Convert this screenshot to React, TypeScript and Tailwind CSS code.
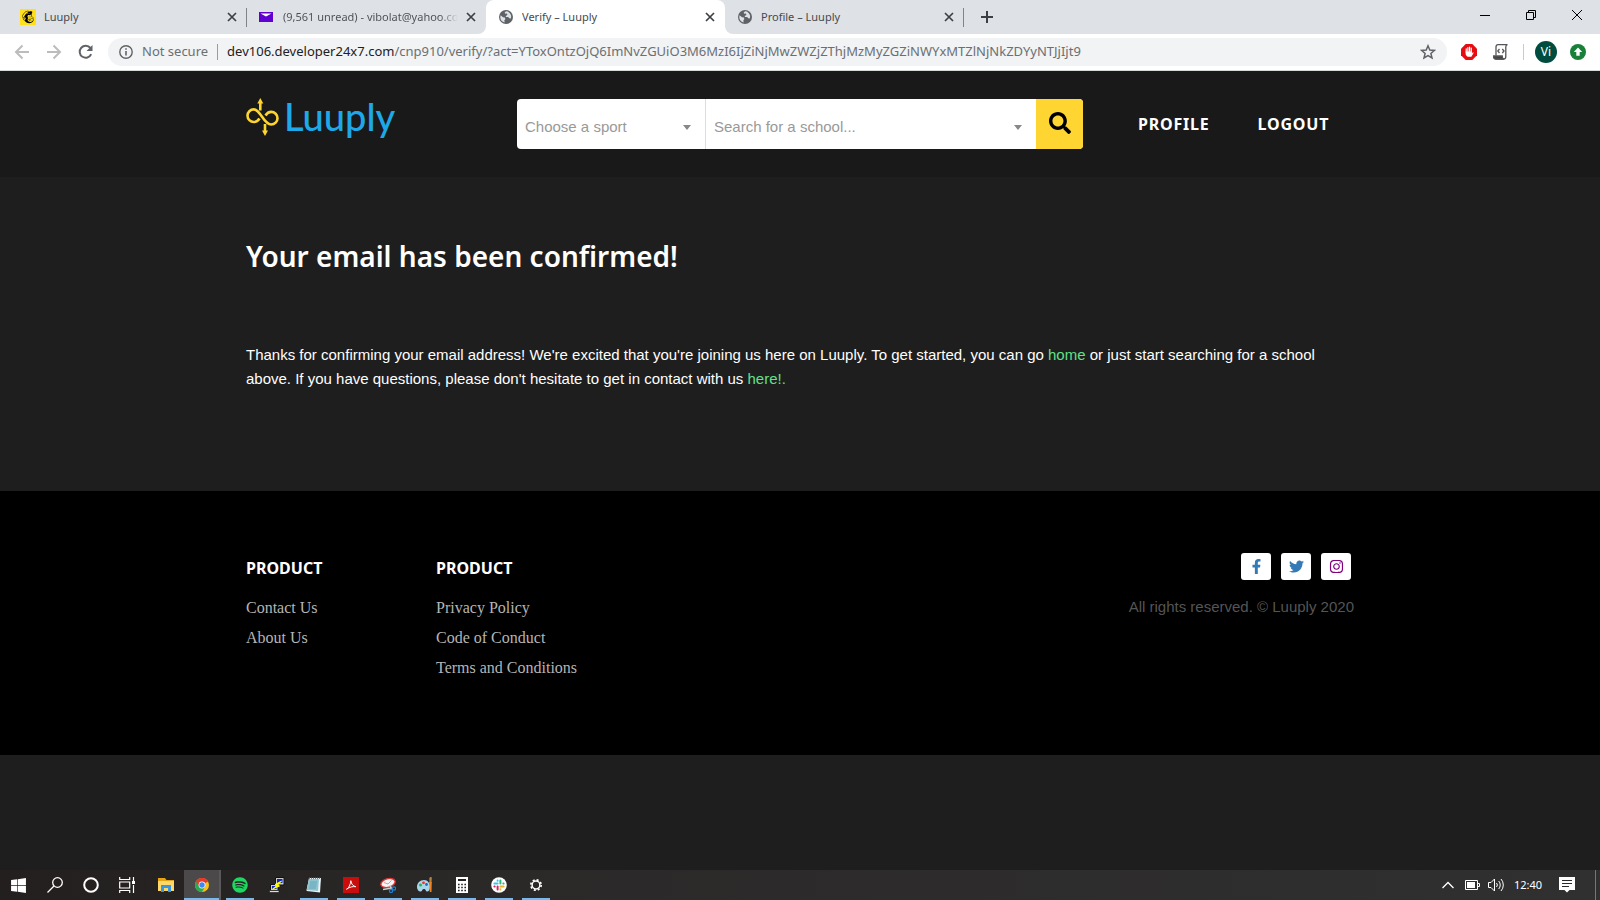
import React from "react";
import { FaFacebookF, FaTwitter, FaInstagram, FaSearch, FaSpotify, FaWindows, FaMailchimp } from "react-icons/fa";

const chromeFont = "font-['Noto_Sans',sans-serif]";
const brandFont = "font-['Noto_Sans','Open_Sans',sans-serif]";

function Globe() {
  return (
    <svg viewBox="0 0 16 16" className="size-4">
      <circle cx="8" cy="8" r="7" fill="#5f6368" />
      <path d="M2.6 6.2 5 8.2l1.8.2.6 1.6-1 1.2.2 2.2C4 13 2.2 10.800 2.300 8zM8 2.300l-1.400 1.500.8 1L9 4.600l.4 1.500-1.700 1 .3 1 2.200-.1 1 1.300 1.600.3c.8-2.400.3-4-1.200-5.600L10 2.600z" fill="#dee1e6" />
    </svg>
  );
}

function Mailchimp() {
  return (
    <span className="grid size-4 place-items-center bg-[#ffe01b] text-black">
      <FaMailchimp size={14} />
    </span>
  );
}

function YahooMail() {
  return (
    <svg viewBox="0 0 16 16" className="size-4">
      <path d="M0 3h14v10H0z" fill="#6001d2" />
      <path d="M1.500 4.500h11L7 7.500z" fill="#fff" />
    </svg>
  );
}

function CloseMark() {
  return (
    <svg viewBox="0 0 10 10" className="size-[10px]" stroke="#3c4043" strokeWidth="1.700">
      <path d="M1 1l8 8M9 1l-8 8" />
    </svg>
  );
}

type TabProps = { icon: React.ReactNode; title: string; active?: boolean; fade?: boolean; divider?: boolean };

function Tab({ icon, title, active, fade, divider }: TabProps) {
  return (
    <div className={`relative flex h-[34px] w-[239px] min-w-0 items-center pl-3 pr-[10px] ${active ? "rounded-t-lg bg-white" : ""}`}>
      {active && (
        <svg viewBox="0 0 255 8" className="pointer-events-none absolute -left-2 bottom-0 h-2 w-[255px]" fill="#fff">
          <path d="M0 8a8 8 0 0 0 8-8v8zM255 8a8 8 0 0 1-8-8v8z" />
        </svg>
      )}
      <span className="shrink-0">{icon}</span>
      <a
        href="#tab"
        className={`ml-2 flex-1 overflow-hidden whitespace-nowrap text-[11px] ${fade ? "bg-linear-to-r from-[#4b4e52] from-90% to-transparent bg-clip-text text-transparent" : "text-[#45494d]"}`}
      >
        {title}
      </a>
      <button aria-label={`Close ${title}`} className="ml-2 shrink-0">
        <CloseMark />
      </button>
      {divider && <span className="absolute right-0 top-2 h-[19px] w-px bg-[#808387]" />}
    </div>
  );
}

function TabStrip() {
  return (
    <div className="flex h-[34px] items-center bg-[#dee1e6] pl-2">
      <Tab icon={<Mailchimp />} title="Luuply" divider />
      <Tab icon={<YahooMail />} title="(9,561 unread) - vibolat@yahoo.com" fade />
      <Tab icon={<Globe />} title="Verify – Luuply" active />
      <Tab icon={<Globe />} title="Profile – Luuply" divider />
      <button aria-label="New tab" className="ml-4">
        <svg viewBox="0 0 14 14" className="size-[14px]" stroke="#3c4043" strokeWidth="2">
          <path d="M7 1v12M1 7h12" />
        </svg>
      </button>
      <div className="mb-[5px] ml-auto flex items-center gap-9 pr-[18px]">
        <button aria-label="Minimize">
          <svg viewBox="0 0 10 10" className="size-[10px]" stroke="#000">
            <path d="M0 5.500h10" />
          </svg>
        </button>
        <button aria-label="Restore">
          <svg viewBox="0 0 10 10" className="size-[10px]" fill="none" stroke="#000">
            <path d="M.5 2.500h7v7h-7zM2.500 2.500v-2h7v7h-2" />
          </svg>
        </button>
        <button aria-label="Close window">
          <svg viewBox="0 0 10 10" className="size-[10px]" stroke="#000">
            <path d="M0 0l10 10M10 0L0 10" />
          </svg>
        </button>
      </div>
    </div>
  );
}

function Toolbar() {
  return (
    <div className="flex h-[37px] items-center border-b border-[#d4dbd6] bg-white pl-[14px] pr-[14px]">
      <div className="flex items-center gap-4">
        <button aria-label="Back">
          <svg viewBox="0 0 16 16" className="size-4" fill="none" stroke="#babcbe" strokeWidth="2">
            <path d="M15 8H2M8.500 1.500 2 8l6.500 6.500" />
          </svg>
        </button>
        <button aria-label="Forward">
          <svg viewBox="0 0 16 16" className="size-4" fill="none" stroke="#babcbe" strokeWidth="2">
            <path d="M1 8h13M7.500 1.500 14 8l-6.500 6.500" />
          </svg>
        </button>
        <button aria-label="Reload">
          <svg viewBox="0 0 16 16" className="size-4" fill="none" stroke="#5f6368" strokeWidth="2">
            <path d="M13.200 10.200A6 6 0 1 1 12.400 4" />
            <path d="M14.500 1v6H8.500z" fill="#5f6368" stroke="none" />
          </svg>
        </button>
      </div>
      <div className="ml-[14px] flex h-7 flex-1 items-center rounded-full bg-[#f1f3f4] pl-[11px] pr-[11px] text-[#6b6f73]">
        <svg viewBox="0 0 14 14" className="size-[14px]" fill="none" stroke="#5f6368" strokeWidth="1.400">
          <circle cx="7" cy="7" r="6.200" />
          <path d="M7 6v4.500M7 3.300v1.500" strokeWidth="1.600" />
        </svg>
        <span className="ml-[9px] whitespace-nowrap text-[13px]">Not secure</span>
        <span className="mx-[9px] h-4 w-px bg-[#9a9da0]" />
        <label htmlFor="address" className="whitespace-nowrap text-[13px] text-[#202124]">
          dev106.developer24x7.com
        </label>
        <input
          id="address"
          className="min-w-0 flex-1 bg-transparent text-[13px] text-[#6b6f73] outline-none"
          defaultValue="/cnp910/verify/?act=YToxOntzOjQ6ImNvZGUiO3M6MzI6IjZiNjMwZWZjZThjMzMyZGZiNWYxMTZlNjNkZDYyNTJjIjt9"
        />
        <button aria-label="Bookmark">
          <svg viewBox="0 0 16 16" className="size-4" fill="none" stroke="#5f6368" strokeWidth="1.500">
            <path d="M8 1.800l1.800 4.200 4.600.4-3.500 3 1.100 4.500L8 11.500l-4 2.400 1.100-4.500-3.500-3 4.600-.4z" />
          </svg>
        </button>
      </div>
      <div className="ml-[14px] flex items-center">
        <button aria-label="Ad blocker">
          <svg viewBox="0 0 16 16" className="size-4">
            <path d="M4.700 0h6.600L16 4.700v6.600L11.300 16H4.700L0 11.300V4.700z" fill="#e40d12" />
            <path d="M5.200 8V4.800M6.900 7.500V3.500M8.600 7.500V3.200M10.300 8V4.200" stroke="#fff" strokeWidth="1.200" strokeLinecap="round" />
            <path d="M4.600 7.500h6.300v2l1-1.300.8.500-2.300 4H6.600c-1.300-.8-2-1.800-2-3.200z" fill="#fff" />
          </svg>
        </button>
        <button aria-label="Script manager" className="ml-4">
          <svg viewBox="0 0 16 16" className="size-4" fill="none" stroke="#555" strokeWidth="1.300">
            <path d="M3 11.500V3c0-1.500.8-2.300 2-2.300h9.500c-1.300.2-1.700 1-1.700 2.300v9.500c0 1.600-.7 2.500-2 2.500H2.500" />
            <path d="M.5 12h8.700c0 1.600.5 2.600 1.600 3.200H2.500C1.300 15.200.5 14 .5 12z" fill="#444" />
            <path d="M6.500 5 4.800 7l1.700 2M9.300 5 11 7 9.300 9" />
          </svg>
        </button>
        <span className="ml-[14px] h-4 w-px bg-[#c8cacc]" />
        <button className="ml-[11px] grid size-[22px] place-items-center rounded-full bg-[#004d40] text-[12px] leading-none text-white">Vi</button>
        <button aria-label="Update" className="ml-[13px]">
          <svg viewBox="0 0 16 16" className="size-4">
            <circle cx="8" cy="8" r="8" fill="#188038" />
            <path d="M8 3.500 12.200 8H9.700v3.800H6.300V8H3.800z" fill="#fff" />
          </svg>
        </button>
      </div>
    </div>
  );
}

function Logo() {
  return (
    <a href="#home" className="flex items-start gap-[5px] pt-px text-[#1fa8e8]">
      <svg viewBox="0 0 33 38" className="h-[38px] w-[33px]" fill="none" stroke="#fdd430" strokeWidth="2.600">
        <path d="M13.500 20.500C12 23 10 24 7.800 24A6.300 6.300 0 0 1 1.500 17.700 6.300 6.300 0 0 1 7.800 11.400C14.500 11.400 17.500 26.500 25.200 26.500A6.300 6.300 0 0 0 31.500 20.200 6.300 6.300 0 0 0 25.200 13.900C22.800 13.900 21 15 19.500 17.500" />
        <path d="M14.300 12.500V5M19 26V33" />
        <path d="M14.300 0l3 5.500h-6zM19 38l3-5.500h-6z" fill="#fdd430" stroke="none" />
      </svg>
      <span className="font-['Lato',sans-serif] text-[38px] font-medium leading-9">Luuply</span>
    </a>
  );
}

type PickerProps = { label: string; className: string };

function Picker({ label, className }: PickerProps) {
  return (
    <div className={`relative ${className}`}>
      <select aria-label={label} className="h-full w-full appearance-none bg-transparent pl-2 pt-[6px] text-[15px] text-[#999] outline-none">
        <option>{label}</option>
      </select>
      <svg viewBox="0 0 8 5" className="pointer-events-none absolute right-[14px] top-[26px] h-[5px] w-2" fill="#888">
        <path d="M0 0h8L4 5z" />
      </svg>
    </div>
  );
}

function Header() {
  return (
    <header className="bg-[#191919]">
      <div className="mx-auto flex h-[106px] max-w-[1108px] items-start pt-[26px]">
        <div className="w-[271px] shrink-0">
          <Logo />
        </div>
        <form className="mt-[2px] flex h-[50px] w-[566px] overflow-hidden rounded bg-white">
          <Picker label="Choose a sport" className="w-[188px]" />
          <Picker label="Search for a school..." className="flex-1 border-l border-[#ddd]" />
          <button type="button" aria-label="Search" className="flex w-[47px] justify-center bg-[#fed531] pt-[13px] text-black">
            <FaSearch size={22} />
          </button>
        </form>
        <nav className={`ml-[55px] mt-[15px] flex gap-12 text-[16px] font-bold leading-6 tracking-wider text-white ${brandFont}`}>
          <a href="#profile">PROFILE</a>
          <a href="#logout">LOGOUT</a>
        </nav>
      </div>
    </header>
  );
}

function Main() {
  return (
    <main className="mx-auto h-[314px] w-full max-w-[1108px] pt-[58px] text-white">
      <h1 className={`text-[28px] font-semibold leading-[42px] ${brandFont}`}>Your email has been confirmed!</h1>
      <p className="mt-[66px] max-w-[1080px] text-[15px] leading-6">
        Thanks for confirming your email address! We're excited that you're joining us here on Luuply. To get started, you can go{" "}
        <a href="#home" className="text-[#62e08a]">home</a> or just start searching for a school above. If you have questions, please
        don't hesitate to get in contact with us <a href="#contact" className="text-[#62e08a]">here!.</a>
      </p>
    </main>
  );
}

function LinkColumn({ links }: { links: string[] }) {
  return (
    <div className="w-[190px]">
      <h2 className={`text-[16px] font-bold leading-6 text-white ${brandFont}`}>PRODUCT</h2>
      <ul className="mt-[13px] font-['Liberation_Serif',serif] text-[16px] leading-[30px] text-[#b5b5b5]">
        {links.map((link) => (
          <li key={link}>
            <a href="#page">{link}</a>
          </li>
        ))}
      </ul>
    </div>
  );
}

function Footer() {
  const box = "grid h-[27px] w-[30px] place-items-center rounded-[3px] bg-white";
  return (
    <footer className="h-[264px] bg-black">
      <div className="mx-auto flex max-w-[1108px] items-start pt-[65px]">
        <LinkColumn links={["Contact Us", "About Us"]} />
        <LinkColumn links={["Privacy Policy", "Code of Conduct", "Terms and Conditions"]} />
        <div className="-mt-[3px] ml-auto flex flex-col items-end">
          <div className="mr-[3px] flex gap-[10px] text-[#337ab7]">
            <a href="#facebook" aria-label="Facebook" className={box}><FaFacebookF size={15} /></a>
            <a href="#twitter" aria-label="Twitter" className={box}><FaTwitter size={15} /></a>
            <a href="#instagram" aria-label="Instagram" className={`${box} text-[#800080]`}><FaInstagram size={15} /></a>
          </div>
          <p className="mt-[15px] text-[15px] leading-6 text-[#555]">All rights reserved. © Luuply 2020</p>
        </div>
      </div>
    </footer>
  );
}

type AppIcon = { name: string; art: React.ReactNode; running?: boolean; current?: boolean };

const apps: AppIcon[] = [
  {
    name: "File Explorer",
    art: (
      <svg viewBox="0 0 16 16" className="size-4">
        <path d="M0 1h7l1.500 2H16v11H0z" fill="#e8a317" />
        <path d="M0 4h16v10H0z" fill="#ffd869" />
        <path d="M3 8h10v7h-3v-4H6v4H3z" fill="#3a96dd" />
      </svg>
    ),
  },
  {
    name: "Chrome",
    running: true,
    current: true,
    art: (
      <svg viewBox="0 0 16 16" className="size-[14px]">
        <circle cx="8" cy="8" r="8" fill="#fbc116" />
        <path d="M8 8 1.070 4A8 8 0 0 1 14.930 4z" fill="#e33b2e" />
        <path d="M8 8 1.070 4A8 8 0 0 0 8 16l3.500-6z" fill="#2da94f" />
        <path d="M1.070 4A8 8 0 0 1 14.930 4H8L5 9.800z" fill="#e33b2e" />
        <circle cx="8" cy="8" r="3.900" fill="#fff" />
        <circle cx="8" cy="8" r="3.100" fill="#4285f4" />
      </svg>
    ),
  },
  { name: "Spotify", running: true, art: <FaSpotify size={16} color="#1ed760" /> },
  {
    name: "PuTTY",
    art: (
      <svg viewBox="0 0 16 16" className="size-4">
        <path d="M6.500.5h8.500v7.500H6.500z" fill="#ccc" stroke="#111" />
        <path d="M1.500 7.500h7.500v6H1.500z" fill="#ccc" stroke="#111" />
        <path d="M8 2h5.500v4H8zM3 9h4.500v3H3z" fill="#1024c8" />
        <path d="M.5 13.500h9.500v2H.5z" fill="#ddd" stroke="#111" strokeWidth=".6" />
        <path d="M12.500 4 6 7.500l2 1L3.500 12l7-3-1.800-1z" fill="#ff0" stroke="#ff0" />
      </svg>
    ),
  },
  {
    name: "Notepad",
    running: true,
    art: (
      <svg viewBox="0 0 16 16" className="size-4">
        <path d="M3 1h12l-1 14.500L.5 14z" fill="#e8f4f7" />
        <path d="M3 2h10l-1 12L.5 13z" fill="#8ec4d1" />
        <path d="M4 5h7M3.700 7h7M3.400 9h7M3 11h7" stroke="#5a9bae" strokeWidth=".7" />
        <path d="M3 1h12" stroke="#555" strokeDasharray="1 1" strokeWidth="1.500" />
      </svg>
    ),
  },
  {
    name: "Acrobat Reader",
    running: true,
    art: (
      <svg viewBox="0 0 16 16" className="size-4">
        <path d="M0 0h16v16H0z" fill="#c90d0d" />
        <path d="M3.500 12.200c2-.7 4-4.500 4.300-8.500.6 3.500 2.200 5.400 5 6-3-.4-6 .2-9.300 2.500z" fill="none" stroke="#fff" strokeWidth="1" />
      </svg>
    ),
  },
  {
    name: "Snipping Tool",
    running: true,
    art: (
      <svg viewBox="0 0 16 16" className="size-4">
        <ellipse cx="8" cy="6" rx="7.300" ry="4.300" fill="#f4f4f4" stroke="#d33" strokeWidth="1.400" transform="rotate(-15 8 6)" />
        <path d="M4 5.500 8 7l3.500-3.500" fill="none" stroke="#d99" />
        <path d="M3 12.500l9-1.500M10 8l1.500 5" stroke="#ccc" strokeWidth="1.400" />
        <circle cx="11" cy="14" r="1.600" fill="none" stroke="#1b83d2" strokeWidth="1.200" />
        <circle cx="14" cy="11.500" r="1.600" fill="none" stroke="#1b83d2" strokeWidth="1.200" />
      </svg>
    ),
  },
  {
    name: "Paint",
    running: true,
    art: (
      <svg viewBox="0 0 16 16" className="size-4">
        <path d="M7 3C3 3 0 6 0 10c0 3 2 5 4 4.500 1.500-.5 1-2.500 3-2.500s1.500 2.500 3 2.500c2 0 3-2 3-5S11 3 7 3z" fill="#a9d5ea" />
        <circle cx="3.500" cy="8" r="1.500" fill="#2db04c" />
        <circle cx="6.500" cy="5.800" r="1.400" fill="#e33" />
        <circle cx="9.500" cy="7.500" r="1.400" fill="#26c" />
        <path d="M12.300 1c1-1.500 2.500-1 2.500 0L14.500 6h-2z" fill="#b9803e" />
        <path d="M12.200 5h2.600l-.3 10h-1.700z" fill="#f0831e" />
      </svg>
    ),
  },
  {
    name: "Calculator",
    running: true,
    art: (
      <svg viewBox="0 0 16 16" className="size-4">
        <path d="M2 0h12v16H2z" fill="#fff" />
        <path d="M4 2h8v2H4z" fill="#222" />
        <path d="M4 7.500h8M4 10.500h8M4 13.500h8" stroke="#222" strokeWidth="1.500" strokeDasharray="1.600 1.600" />
      </svg>
    ),
  },
  {
    name: "Slack",
    running: true,
    art: (
      <svg viewBox="0 0 16 16" className="size-4">
        <circle cx="8" cy="8" r="7.800" fill="#fff" />
        <g strokeWidth="2" strokeLinecap="round">
          <path d="M6.600 3.400v.3M3.400 6.600h3.200" stroke="#36c5f0" />
          <path d="M9.400 3.400v3.200M12.600 6.600h-.3" stroke="#2eb67d" />
          <path d="M9.400 12.600v-.3M12.600 9.400H9.400" stroke="#ecb22e" />
          <path d="M6.600 12.600V9.400M3.400 9.400h.3" stroke="#e01e5a" />
        </g>
      </svg>
    ),
  },
  {
    name: "Settings",
    running: true,
    art: (
      <svg viewBox="0 0 16 16" className="size-4" fill="none" stroke="#fff">
        <circle cx="8" cy="8" r="5.200" strokeWidth="1.600" strokeDasharray="2.050 2.034" />
        <circle cx="8" cy="8" r="3.900" strokeWidth="1.500" />
      </svg>
    ),
  },
];

function Taskbar() {
  return (
    <div className="flex h-[30px] items-stretch bg-linear-to-r from-[#231f1f] via-[#2b2828] via-30% to-[#303030] pl-[10px] text-white">
      <div className="flex items-center gap-5">
        <button aria-label="Start">
          <FaWindows size={17} />
        </button>
        <button aria-label="Search Windows">
          <svg viewBox="0 0 16 16" className="size-4" fill="none" stroke="#fff" strokeWidth="1.300">
            <circle cx="10.500" cy="5.500" r="4.800" />
            <path d="M7 9 .5 15.500" />
          </svg>
        </button>
        <button aria-label="Cortana">
          <svg viewBox="0 0 16 16" className="size-4" fill="none" stroke="#fff" strokeWidth="2">
            <circle cx="8" cy="8" r="6.800" />
          </svg>
        </button>
        <button aria-label="Task view">
          <svg viewBox="0 0 16 16" className="size-4" fill="none" stroke="#fff" strokeWidth="1.200">
            <path d="M.7 0v2.500h10V0M.7 5h10v6H.7zM.7 16v-2.500h10V16M14.500 0v4M14.500 8v8" />
            <path d="M13 4h3v3h-3z" fill="#fff" stroke="none" />
          </svg>
        </button>
      </div>
      <div className="ml-[12px] flex">
        {apps.map((app) => (
          <button
            key={app.name}
            aria-label={app.name}
            className={`flex h-[30px] w-[37px] flex-col items-center justify-between ${app.current ? "border-r-2 border-[#5a5858] bg-[#4b4949]" : ""}`}
          >
            <span className="grid flex-1 place-items-center pt-px">{app.art}</span>
            <span className={`h-[2px] ${app.current ? "w-full" : "w-7"} ${app.running ? "bg-[#76b9ed]" : ""}`} />
          </button>
        ))}
      </div>
      <div className={`ml-auto flex items-center ${chromeFont}`}>
        <button aria-label="Show hidden icons">
          <svg viewBox="0 0 12 8" className="h-2 w-3" fill="none" stroke="#fff" strokeWidth="1.300">
            <path d="M.5 7 6 1.500 11.500 7" />
          </svg>
        </button>
        <svg viewBox="0 0 15 10" className="ml-[11px] h-[10px] w-[15px]" fill="none" stroke="#fff">
          <path d="M.5 .5h12v9H.5zM13 3.500h1.500v3H13" />
          <path d="M2 2h8v6H2z" fill="#fff" stroke="none" />
        </svg>
        <svg viewBox="0 0 17 14" className="ml-2 h-[14px] w-[17px]" fill="none" stroke="#fff">
          <path d="M.5 4.500h2.500L6.500 1v12L3 9.500H.5z" />
          <path d="M8.500 5a3 3 0 0 1 0 4M10.700 3a6 6 0 0 1 0 8M13 1a9 9 0 0 1 0 12" />
        </svg>
        <time className="ml-[9px] text-[11px]">12:40</time>
        <button aria-label="Notifications" className="ml-[17px]">
          <svg viewBox="0 0 16 16" className="size-4">
            <path d="M0 0h16v13h-5.500L8 15.500 5.500 13H0z" fill="#fff" />
            <path d="M3 3.500h10M3 6.500h10M3 9.500h7" stroke="#2b2b2b" />
          </svg>
        </button>
        <span className="ml-5 mr-1 h-[30px] w-px bg-[#777]" />
      </div>
    </div>
  );
}

export default function App() {
  return (
    <div className="flex min-h-screen flex-col bg-[#1e1e1e] font-['Liberation_Sans',Arial,sans-serif]">
      <div className={chromeFont}>
        <TabStrip />
        <Toolbar />
      </div>
      <div className="flex-1">
        <Header />
        <Main />
        <Footer />
      </div>
      <Taskbar />
    </div>
  );
}
